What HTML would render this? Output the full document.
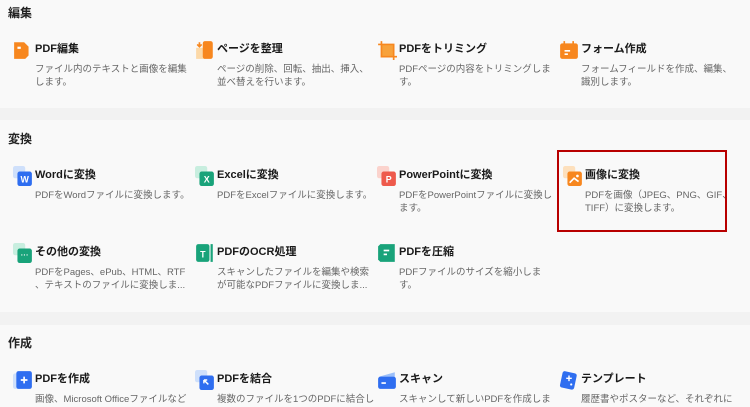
<!DOCTYPE html>
<html><head><meta charset="utf-8"><style>
*{margin:0;padding:0;box-sizing:border-box}
body{width:750px;height:407px;overflow:hidden;background:#f9f9f9;font-family:"Liberation Sans","Noto Sans CJK JP",sans-serif;position:relative}
.band{position:absolute;left:0;width:750px;background:#f2f2f2}
.h{position:absolute;left:8px;font-size:12px;font-weight:bold;color:#222}
.it{position:absolute;width:182px}
.ic{position:absolute;left:-1px;top:-1px;width:20px;height:20px}
.t{position:absolute;left:21px;top:1px;font-size:11px;font-weight:bold;color:#1a1a1a;white-space:nowrap;line-height:14px}
.d{position:absolute;left:21px;top:23px;white-space:nowrap;font-size:9.5px;color:#666;line-height:12.5px}
.box{position:absolute;left:557px;top:150px;width:170px;height:82px;border:2px solid #b80000}
</style></head><body>
<div class="band" style="top:108px;height:12px"></div>
<div class="band" style="top:312px;height:13px"></div>
<div class="h" style="top:4px">編集</div>
<div class="h" style="top:130px">変換</div>
<div class="h" style="top:334px">作成</div>

<div class="it" style="left:14px;top:41px"><svg class="ic" viewBox="0 0 18 18"><path d="M1 2h9l4 4v8l-3 3H1z" fill="#f7871f"/><rect x="4" y="6" width="3" height="2" fill="#fff"/></svg><div class="t">PDF編集</div><div class="d">ファイル内のテキストと画像を編集<br>します。</div></div>
<div class="it" style="left:196px;top:41px"><svg class="ic" viewBox="0 0 18 18"><rect x="1" y="7" width="8" height="10" fill="#fcd9a8"/><rect x="7" y="1" width="9" height="16" rx="2" fill="#f7871f"/><path d="M4 2v4M2 4l2 2 2-2" stroke="#f7871f" fill="none" stroke-width="1.5"/></svg><div class="t">ページを整理</div><div class="d">ページの削除、回転、抽出、挿入、<br>並べ替えを行います。</div></div>
<div class="it" style="left:378px;top:41px"><svg class="ic" viewBox="0 0 18 18"><rect x="4" y="4" width="11" height="11" fill="#f7a23c"/><path d="M4 1v14h14M1 4h14v14" stroke="#f7871f" fill="none" stroke-width="1.5"/></svg><div class="t">PDFをトリミング</div><div class="d">PDFページの内容をトリミングしま<br>す。</div></div>
<div class="it" style="left:560px;top:41px"><svg class="ic" viewBox="0 0 18 18"><rect x="1" y="3" width="16" height="14" rx="2" fill="#f7871f"/><rect x="4" y="1" width="1.5" height="4" fill="#f7871f"/><rect x="12" y="1" width="1.5" height="4" fill="#f7871f"/><rect x="5" y="9" width="5" height="1.5" fill="#fff"/><rect x="5" y="12" width="3" height="1.5" fill="#fff"/></svg><div class="t">フォーム作成</div><div class="d">フォームフィールドを作成、編集、<br>識別します。</div></div>

<div class="it" style="left:14px;top:167px"><svg class="ic" viewBox="0 0 18 18"><rect x="0" y="0" width="11" height="11" rx="2" fill="#cfe0fb"/><rect x="4" y="5" width="13" height="13" rx="2" fill="#2f6ef0"/><text x="10.5" y="15" font-size="8" fill="#fff" text-anchor="middle" font-weight="bold" font-family="Liberation Sans">W</text></svg><div class="t">Wordに変換</div><div class="d">PDFをWordファイルに変換します。</div></div>
<div class="it" style="left:196px;top:167px"><svg class="ic" viewBox="0 0 18 18"><rect x="0" y="0" width="11" height="11" rx="2" fill="#c8eedf"/><rect x="4" y="5" width="13" height="13" rx="2" fill="#19a37a"/><text x="10.5" y="15" font-size="8" fill="#fff" text-anchor="middle" font-weight="bold" font-family="Liberation Sans">X</text></svg><div class="t">Excelに変換</div><div class="d">PDFをExcelファイルに変換します。</div></div>
<div class="it" style="left:378px;top:167px"><svg class="ic" viewBox="0 0 18 18"><rect x="0" y="0" width="11" height="11" rx="2" fill="#fbd3cd"/><rect x="4" y="5" width="13" height="13" rx="2" fill="#ee5a4c"/><text x="10.5" y="15" font-size="8" fill="#fff" text-anchor="middle" font-weight="bold" font-family="Liberation Sans">P</text></svg><div class="t">PowerPointに変換</div><div class="d">PDFをPowerPointファイルに変換し<br>ます。</div></div>
<div class="it" style="left:564px;top:167px"><svg class="ic" viewBox="0 0 18 18"><rect x="0" y="0" width="11" height="11" rx="2" fill="#fde0bd"/><rect x="4" y="5" width="13" height="13" rx="2" fill="#f7871f"/><path d="M6 15l4-4 4 3" stroke="#fff" fill="none" stroke-width="1.5"/><circle cx="13" cy="9" r="1.2" fill="#fff"/></svg><div class="t">画像に変換</div><div class="d">PDFを画像（JPEG、PNG、GIF、<br>TIFF）に変換します。</div></div>
<div class="box"></div>

<div class="it" style="left:14px;top:244px"><svg class="ic" viewBox="0 0 18 18"><rect x="0" y="0" width="11" height="11" rx="2" fill="#c8eedf"/><rect x="4" y="5" width="13" height="13" rx="2" fill="#19a37a"/><text x="10.5" y="13" font-size="7" fill="#fff" text-anchor="middle" font-weight="bold" font-family="Liberation Sans">···</text></svg><div class="t">その他の変換</div><div class="d">PDFをPages、ePub、HTML、RTF<br>、テキストのファイルに変換しま...</div></div>
<div class="it" style="left:196px;top:244px"><svg class="ic" viewBox="0 0 18 18"><rect x="1" y="1" width="12" height="16" rx="2" fill="#19a37a"/><rect x="14" y="1" width="2" height="16" fill="#19a37a"/><text x="7" y="13" font-size="8" fill="#fff" text-anchor="middle" font-weight="bold" font-family="Liberation Sans">T</text></svg><div class="t">PDFのOCR処理</div><div class="d">スキャンしたファイルを編集や検索<br>が可能なPDFファイルに変換しま...</div></div>
<div class="it" style="left:378px;top:244px"><svg class="ic" viewBox="0 0 18 18"><path d="M3 1h13v16H3l-2-2V3z" fill="#19a37a"/><rect x="6" y="6" width="5" height="1.5" fill="#fff"/><rect x="6" y="9.5" width="3" height="1.5" fill="#fff"/></svg><div class="t">PDFを圧縮</div><div class="d">PDFファイルのサイズを縮小しま<br>す。</div></div>

<div class="it" style="left:14px;top:371px"><svg class="ic" viewBox="0 0 18 18"><rect x="0" y="3" width="10" height="14" rx="2" fill="#cfe0fb"/><rect x="3" y="1" width="14" height="16" rx="2" fill="#2f6ef0"/><path d="M10 6v6M7 9h6" stroke="#fff" stroke-width="1.5"/></svg><div class="t">PDFを作成</div><div class="d">画像、Microsoft Officeファイルなど</div></div>
<div class="it" style="left:196px;top:371px"><svg class="ic" viewBox="0 0 18 18"><rect x="0" y="0" width="11" height="11" rx="2" fill="#cfe0fb"/><rect x="4" y="5" width="13" height="13" rx="2" fill="#2f6ef0"/><path d="M8 9l4 4M8 9h3M8 9v3" stroke="#fff" stroke-width="1.3" fill="none"/></svg><div class="t">PDFを結合</div><div class="d">複数のファイルを1つのPDFに結合し</div></div>
<div class="it" style="left:378px;top:371px"><svg class="ic" viewBox="0 0 18 18"><path d="M2 6l14-4v4z" fill="#9cc0fa"/><rect x="1" y="6" width="16" height="11" rx="2" fill="#2f6ef0"/><rect x="4" y="11" width="4" height="1.5" fill="#fff"/></svg><div class="t">スキャン</div><div class="d">スキャンして新しいPDFを作成しま</div></div>
<div class="it" style="left:560px;top:371px"><svg class="ic" viewBox="0 0 18 18"><rect x="2" y="2" width="13" height="15" rx="2" fill="#2f6ef0" transform="rotate(12 9 9)"/><path d="M9 5v5M6.5 7.5h5" stroke="#fff" stroke-width="1.3"/><circle cx="11" cy="13" r="1" fill="#fff"/></svg><div class="t">テンプレート</div><div class="d">履歴書やポスターなど、それぞれに</div></div>
</body></html>
